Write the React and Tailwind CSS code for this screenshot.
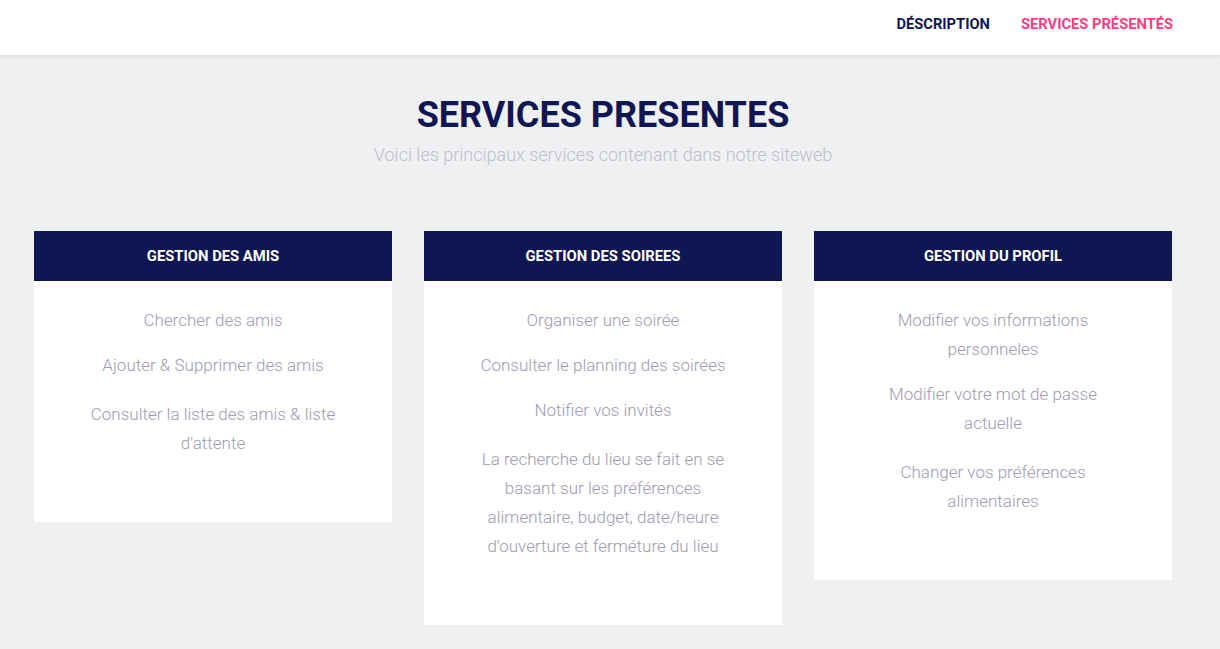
import React from "react";

const cards = [
  {
    title: "GESTION DES AMIS",
    items: ["Chercher des amis", "Ajouter & Supprimer des amis", "Consulter la liste des amis & liste d'attente"],
  },
  {
    title: "GESTION DES SOIREES",
    items: [
      "Organiser une soirée",
      "Consulter le planning des soirées",
      "Notifier vos invités",
      "La recherche du lieu se fait en se basant sur les préférences alimentaire, budget, date/heure d'ouverture et ferméture du lieu",
    ],
  },
  {
    title: "GESTION DU PROFIL",
    items: ["Modifier vos informations personneles", "Modifier votre mot de passe actuelle", "Changer vos préférences alimentaires"],
  },
];

export default function App() {
  return (
    <div className="min-h-[649px] bg-[#eff0f2] font-['Roboto',sans-serif]">
      <header className="h-[55px] bg-white shadow-[0_1px_4px_rgba(0,0,0,0.12)] flex items-center justify-end pr-[47px] relative z-10">
        <nav className="flex items-center gap-[31px] text-[14.7px] font-bold pb-[7px]">
          <a className="text-[#0f1654]">DÉSCRIPTION</a>
          <a className="text-[#ff3d7f]">SERVICES PRÉSENTÉS</a>
        </nav>
      </header>
      <main className="w-[1206px] px-[34px]">
        <div className="flex flex-col items-center pt-[38px]">
          <h1 className="text-[36px] leading-[44px] font-bold text-[#0f1654]">SERVICES PRESENTES</h1>
          <p className="mt-[6px] text-[18px] leading-[24px] font-light text-[#bdbfca]">
            Voici les principaux services contenant dans notre siteweb
          </p>
        </div>
        <div className="grid grid-cols-3 gap-[32px] mt-[64px] items-start">
          {cards.map((c) => (
            <div key={c.title} className="bg-white">
              <div className="h-[50px] bg-[#0f1654] flex items-center justify-center text-white text-[14.8px] font-bold">
                {c.title}
              </div>
              <ul className="px-[50px] pt-[25px] pb-[64px] flex flex-col gap-[16px] text-center text-[17px] leading-[29px] font-light text-[#a09ab2]">
                {c.items.map((it, i) => (
                  <li key={i} className={i === c.items.length - 1 ? "mt-[4px]" : ""}>
                    {it}
                  </li>
                ))}
              </ul>
            </div>
          ))}
        </div>
      </main>
    </div>
  );
}
